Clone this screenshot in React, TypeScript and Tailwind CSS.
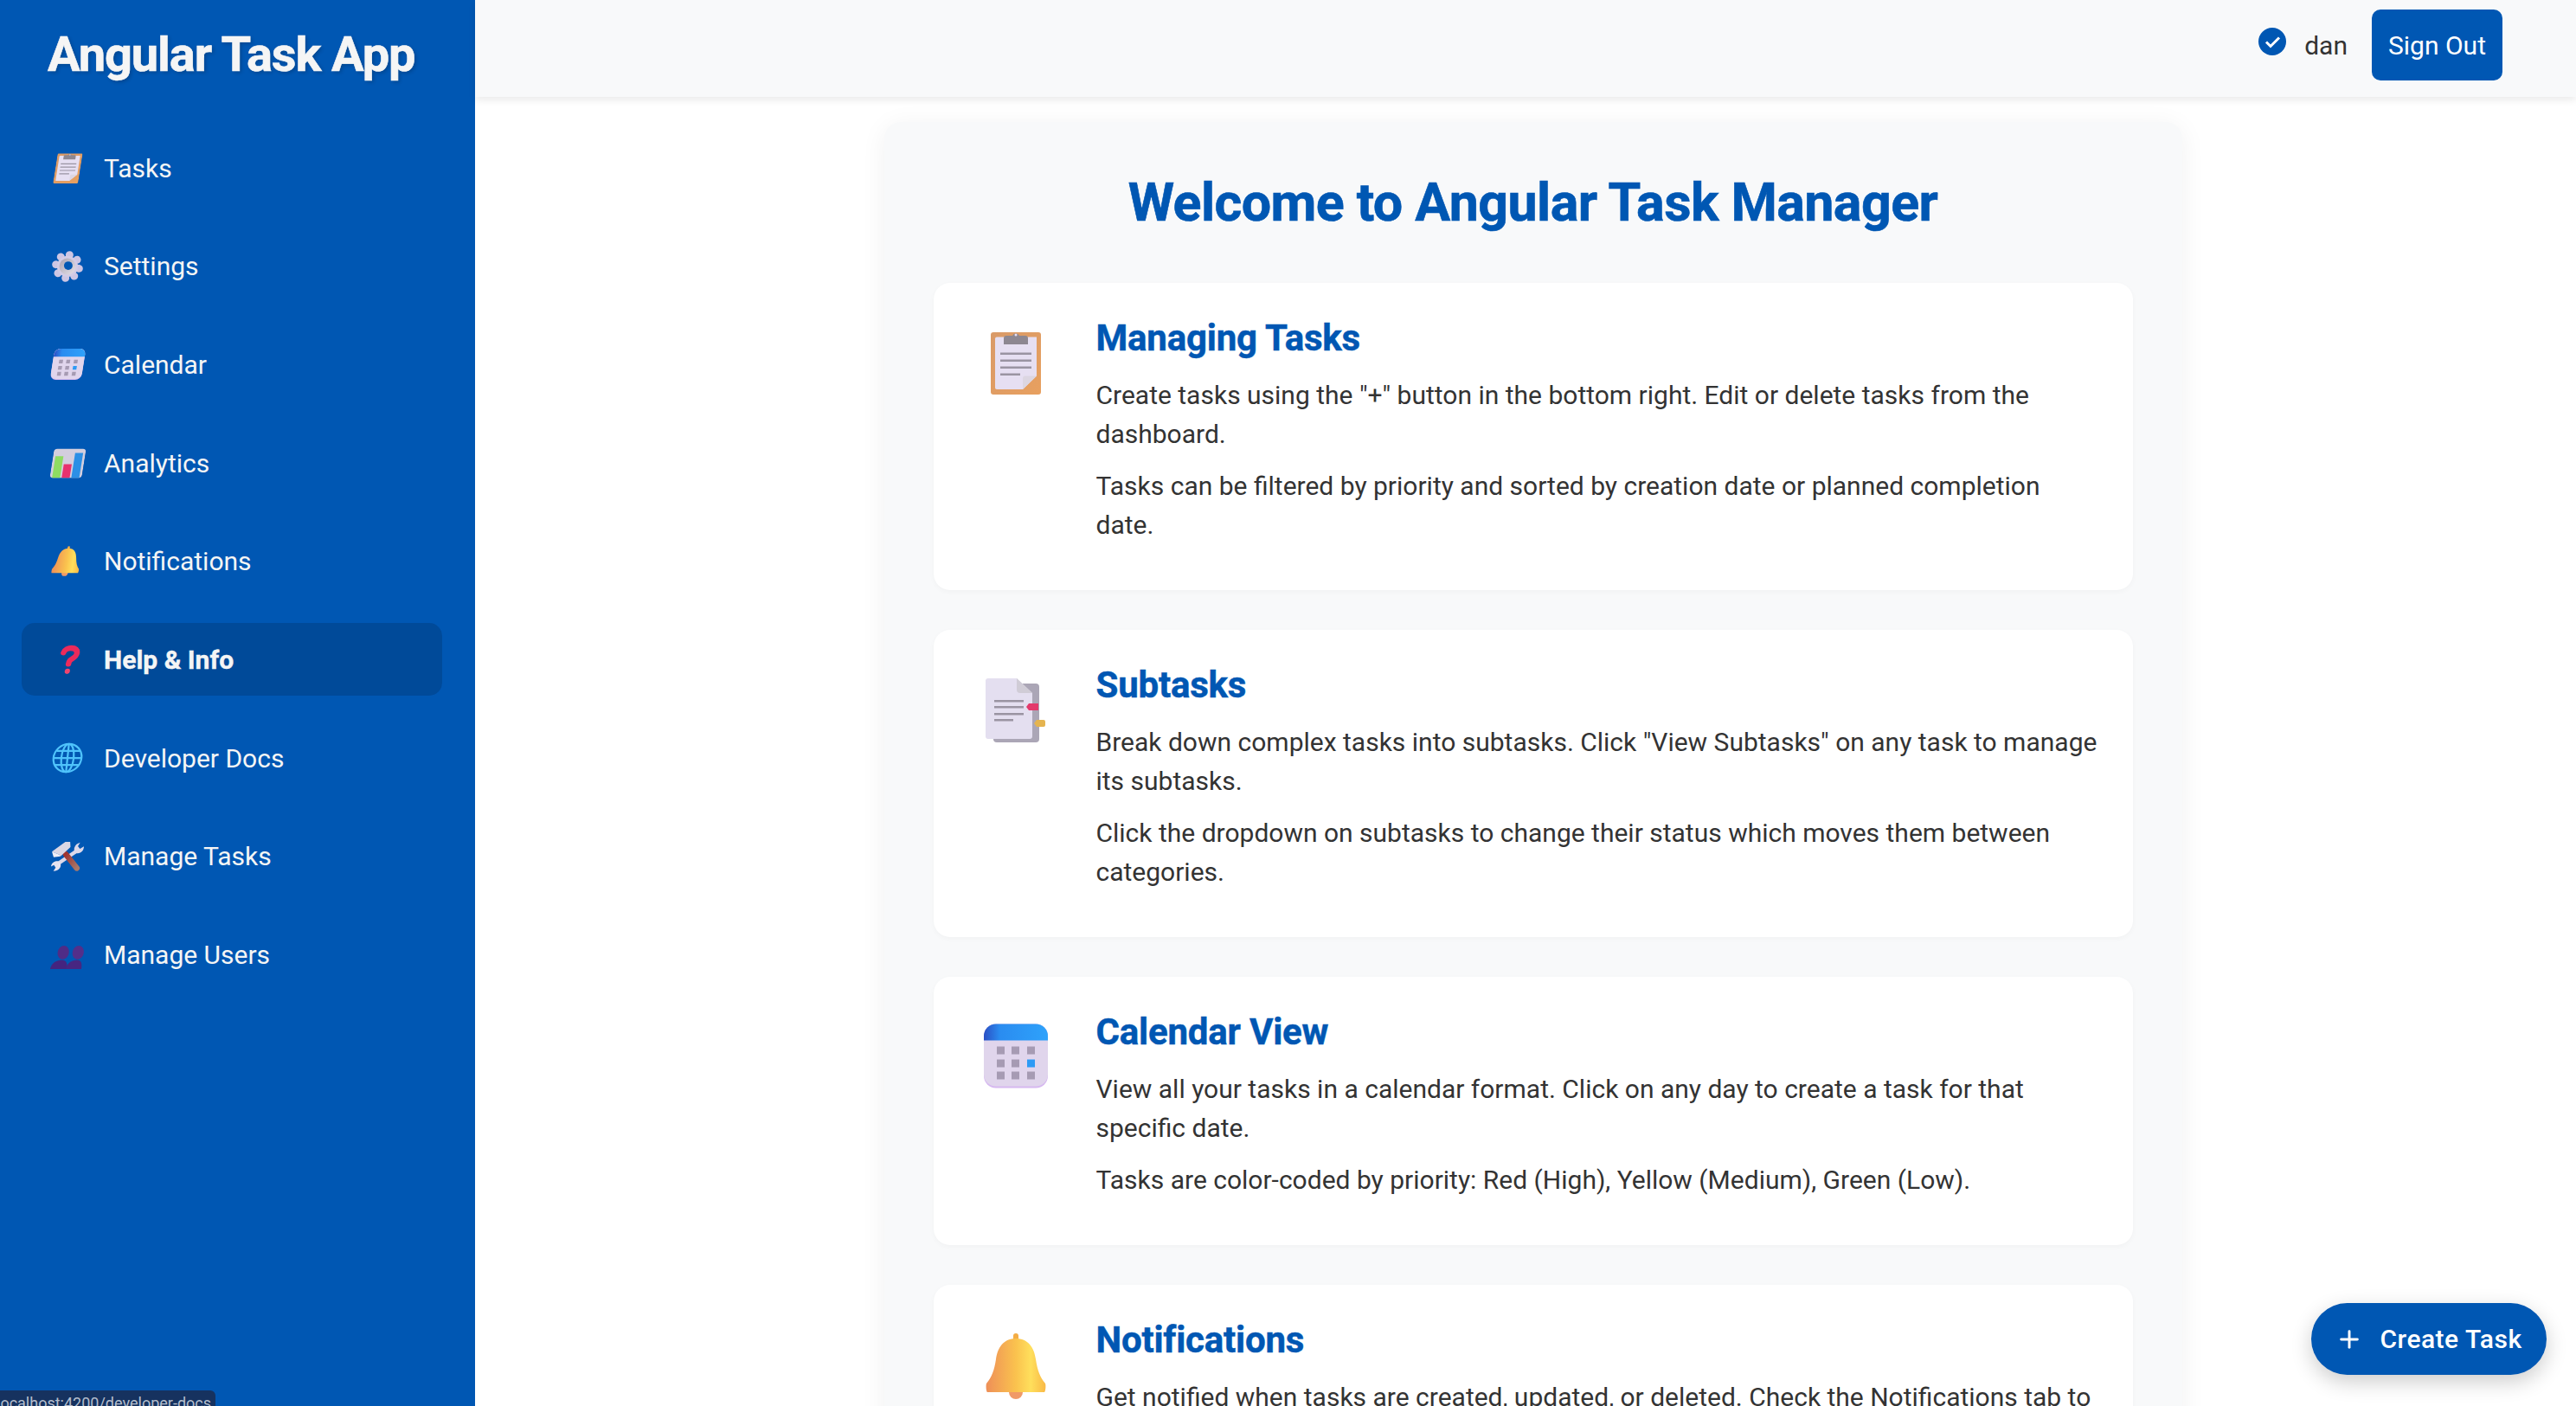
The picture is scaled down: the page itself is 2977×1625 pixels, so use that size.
import React from "react";
import { Plus } from "lucide-react";

type IconProps = { className?: string };

function ClipboardIcon({ className }: IconProps) {
  return (
    <svg viewBox="0 0 58 75" className={className} preserveAspectRatio="none">
      <defs>
        <linearGradient id="clipBoard" x1="0" y1="0" x2="1" y2="1">
          <stop offset="0" stopColor="#d99a68" />
          <stop offset="1" stopColor="#e8a05f" />
        </linearGradient>
      </defs>
      <rect x="0" y="3" width="58" height="72" rx="3" fill="url(#clipBoard)" />
      <path d="M7 8.500h46v45L37 69H7a2 2 0 0 1-2-2V10.500a2 2 0 0 1 2-2z" fill="#e6dff2" />
      <path d="M53 53.500H40a3 3 0 0 0-3 3V69z" fill="#dcd6e2" />
      <path d="M18 7h7a4.500 4.500 0 0 1 8 0h7a3 3 0 0 1 3 3v7H15v-7a3 3 0 0 1 3-3z" fill="#8d8791" />
      <circle cx="29" cy="6" r="1.500" fill="#e6dff2" />
      <rect x="11" y="26.500" width="36" height="2.500" fill="#9a94a2" />
      <rect x="11" y="34.500" width="36" height="2.500" fill="#9a94a2" />
      <rect x="11" y="42.500" width="36" height="2.500" fill="#9a94a2" />
      <rect x="11" y="50.500" width="23" height="2.500" fill="#9a94a2" />
    </svg>
  );
}

function PageIcon({ className }: IconProps) {
  return (
    <svg viewBox="0 0 70 76" className={className}>
      <rect x="9" y="6" width="53" height="68" rx="4" fill="#aba6b6" />
      <path d="M3 0h33l18 17v50a3 3 0 0 1-3 3H3a3 3 0 0 1-3-3V3a3 3 0 0 1 3-3z" fill="#e4dff0" />
      <path d="M36 0l18 17H40a4 4 0 0 1-4-4z" fill="#d0ccd6" />
      <rect x="10" y="25" width="34" height="2.500" fill="#9a94a2" />
      <rect x="10" y="32" width="34" height="2.500" fill="#9a94a2" />
      <rect x="10" y="40" width="34" height="2.500" fill="#9a94a2" />
      <rect x="10" y="47" width="22" height="2.500" fill="#9a94a2" />
      <path d="M50 29h11v8H50l-3-4z" fill="#e33a6c" />
      <path d="M59 48h8a2 2 0 0 1 2 2v4a2 2 0 0 1-2 2h-8l-3-4z" fill="#e5b44f" />
    </svg>
  );
}

function CalendarIcon({ className }: IconProps) {
  const cells = [
    [15, 26], [32, 26], [50, 26],
    [15, 41], [32, 41], [50, 41],
    [15, 55], [32, 55], [50, 55],
  ];
  return (
    <svg viewBox="0 0 74 74" className={className}>
      <defs>
        <linearGradient id="calTop" x1="0" y1="0" x2="1" y2="0">
          <stop offset="0" stopColor="#2b4fc4" />
          <stop offset="0.25" stopColor="#2a8cf0" />
          <stop offset="1" stopColor="#2ea2fb" />
        </linearGradient>
      </defs>
      <rect x="0" y="0" width="74" height="74" rx="14" fill="#d6b8f0" />
      <rect x="0" y="0" width="74" height="72" rx="14" fill="#e0d5ec" />
      <path d="M14 0h46a14 14 0 0 1 14 14v5H0v-5A14 14 0 0 1 14 0z" fill="url(#calTop)" />
      {cells.map(([x, y], i) => (
        <rect key={i} x={x} y={y} width="9" height="9" fill={i === 5 ? "#2e9bf5" : "#a69bb3"} />
      ))}
    </svg>
  );
}

function BellIcon({ className }: IconProps) {
  return (
    <svg viewBox="0 0 70 76" className={className}>
      <defs>
        <linearGradient id="bellBody" x1="0" y1="0" x2="1" y2="0">
          <stop offset="0" stopColor="#ee8f58" />
          <stop offset="0.5" stopColor="#fac24e" />
          <stop offset="0.75" stopColor="#ffdf5c" />
          <stop offset="1" stopColor="#f9b946" />
        </linearGradient>
      </defs>
      <circle cx="35" cy="68" r="8" fill="#f09a68" />
      <rect x="32" y="0" width="6" height="10" rx="3" fill="#f4ad45" />
      <path d="M35 6c-14 0-21 10-23 24-2 13-5 21-11 28-1 3 0 10 1 10h66c1 0 2-7 1-10-6-7-9-15-11-28C56 16 49 6 35 6z" fill="url(#bellBody)" />
    </svg>
  );
}

function GearIcon({ className }: IconProps) {
  const teeth = [10, 55, 100, 145, 190, 235, 280, 325];
  return (
    <svg viewBox="0 0 40 40" className={className}>
      <defs>
        <linearGradient id="gearRing" x1="0" y1="0" x2="1" y2="1">
          <stop offset="0" stopColor="#a8a2b0" />
          <stop offset="1" stopColor="#e6e2ea" />
        </linearGradient>
      </defs>
      {teeth.map((a) => (
        <circle key={a} cx="20" cy="5" r="5" fill="#cdc6e4" transform={`rotate(${a} 20 20)`} />
      ))}
      <circle cx="20" cy="20" r="13.500" fill="#d3cce6" />
      <circle cx="20" cy="20" r="10.500" fill="url(#gearRing)" />
      <circle cx="21" cy="19" r="5.500" fill="#0057b3" />
    </svg>
  );
}

function ChartIcon({ className }: IconProps) {
  return (
    <svg viewBox="0 0 40 36" className={className}>
      <rect x="0" y="0" width="40" height="36" rx="4" fill="#d3cede" />
      <rect x="3" y="9" width="10" height="27" fill="#8edc62" />
      <rect x="15" y="19" width="10" height="17" fill="#e8316e" />
      <rect x="27" y="5" width="10" height="31" fill="#2b8fe6" />
    </svg>
  );
}

function QuestionIcon({ className }: IconProps) {
  return (
    <svg viewBox="0 0 30 40" className={className}>
      <path
        d="M6 11c1-4 5-6 9-6 6 0 9 3 9 7 0 4-3 6-6 8-2 1-3 3-3 6"
        fill="none"
        stroke="#ec2a5b"
        strokeWidth="7.500"
        strokeLinecap="round"
      />
      <circle cx="15" cy="36" r="3.500" fill="#f0456e" />
    </svg>
  );
}

function GlobeIcon({ className }: IconProps) {
  return (
    <svg viewBox="0 0 40 40" className={className} fill="none" stroke="#4fc3fb" strokeWidth="2.500">
      <circle cx="20" cy="20" r="18" />
      <ellipse cx="20" cy="20" rx="8" ry="18" />
      <path d="M20 2v36M2 20h36M5 11h30M5 29h30" />
    </svg>
  );
}

function ToolsIcon({ className }: IconProps) {
  return (
    <svg viewBox="0 0 115 103" className={className}>
      <defs>
        <linearGradient id="toolHandle" x1="0" y1="0" x2="1" y2="1">
          <stop offset="0" stopColor="#a0342f" />
          <stop offset="1" stopColor="#a8786a" />
        </linearGradient>
      </defs>
      <path d="M25 76 92 30" stroke="#dcd8ea" strokeWidth="13" />
      <path d="M115 16c0 14-10 26-25 24-8-2-11-12-8-20 3-10 10-15 20-18l-8 13 7 9z" fill="#dcd8ea" />
      <path d="M0 86c2-12 12-20 25-18 9 3 11 13 7 21-5 9-14 13-24 13l8-12-6-9z" fill="#e6e2f0" />
      <path d="M52 44 90 92" stroke="url(#toolHandle)" strokeWidth="20" strokeLinecap="round" />
      <path d="M3 34 50 0h17l1 18-35 33-4-6z" fill="#dbd7e4" />
      <path d="M3 34l26 11 4 6-24 3z" fill="#f0eef6" />
    </svg>
  );
}

function UsersIcon({ className }: IconProps) {
  return (
    <svg viewBox="0 0 113 82" className={className}>
      <ellipse cx="40" cy="24" rx="20" ry="24" fill="#4f2c86" />
      <path d="M0 82C2 60 20 50 38 50c14 0 22 12 20 32z" fill="#44247f" />
      <ellipse cx="92" cy="24" rx="20" ry="24" fill="#532f8a" />
      <path d="M55 82c2-22 18-32 36-32 14 0 20 12 18 32z" fill="#472681" />
    </svg>
  );
}

const navItems = [
  { label: "Tasks", icon: ClipboardIcon, size: "w-[29px] h-[36px] skew-x-[-9deg]" },
  { label: "Settings", icon: GearIcon, size: "w-[36px] h-[36px]" },
  { label: "Calendar", icon: CalendarIcon, size: "w-[37px] h-[36px] skew-x-[-9deg]" },
  { label: "Analytics", icon: ChartIcon, size: "w-[37px] h-[35px] skew-x-[-9deg]" },
  { label: "Notifications", icon: BellIcon, size: "w-[32px] h-[35px] skew-x-[-9deg] -ml-[2px]" },
  { label: "Help & Info", icon: QuestionIcon, size: "w-[26px] h-[36px] skew-x-[-9deg] ml-[4px]", active: true },
  { label: "Developer Docs", icon: GlobeIcon, size: "w-[36px] h-[36px] skew-x-[-6deg]" },
  { label: "Manage Tasks", icon: ToolsIcon, size: "w-[38px] h-[34px]" },
  { label: "Manage Users", icon: UsersIcon, size: "w-[38px] h-[27px] mt-[6px] skew-x-[-6deg]" },
];

const sections = [
  {
    title: "Managing Tasks",
    icon: ClipboardIcon,
    size: "w-[58px] h-[75px]",
    paragraphs: [
      'Create tasks using the "+" button in the bottom right. Edit or delete tasks from the dashboard.',
      "Tasks can be filtered by priority and sorted by creation date or planned completion date.",
    ],
  },
  {
    title: "Subtasks",
    icon: PageIcon,
    size: "w-[70px] h-[76px] mt-[2px]",
    paragraphs: [
      'Break down complex tasks into subtasks. Click "View Subtasks" on any task to manage its subtasks.',
      "Click the dropdown on subtasks to change their status which moves them between categories.",
    ],
  },
  {
    title: "Calendar View",
    icon: CalendarIcon,
    size: "w-[74px] h-[75px]",
    paragraphs: [
      "View all your tasks in a calendar format. Click on any day to create a task for that specific date.",
      "Tasks are color-coded by priority: Red (High), Yellow (Medium), Green (Low).",
    ],
  },
  {
    title: "Notifications",
    icon: BellIcon,
    size: "w-[70px] h-[76px] mt-[2px]",
    paragraphs: [
      "Get notified when tasks are created, updated, or deleted. Check the Notifications tab to view your recent activity.",
    ],
  },
];

function Sidebar() {
  return (
    <aside className="w-[549px] shrink-0 bg-[#0057b3] text-[#f5f5f5] h-full relative">
      <h1 className="pl-[55px] pt-[28px] text-[56px] leading-[70px] font-bold tracking-[-1.1px] [-webkit-text-stroke:0.6px] [text-shadow:2px_2px_4px_rgba(0,0,0,0.2)]">
        Angular Task App
      </h1>
      <nav className="mt-[54px] flex flex-col gap-[29.7px] pl-[25px] pr-[38px]">
        {navItems.map((item) => (
          <a
            key={item.label}
            className={
              "h-[84px] flex items-center rounded-[15px] text-[30px] " +
              (item.active ? "bg-[#004a99] font-bold [-webkit-text-stroke:0.4px]" : "")
            }
          >
            <span className="w-[80px] pl-[26px] flex justify-center shrink-0">
              <item.icon className={item.size} />
            </span>
            <span className="ml-[15px]">{item.label}</span>
          </a>
        ))}
      </nav>
      <div className="absolute left-0 bottom-0 w-[249px] h-[18px] overflow-hidden bg-[#16325f] rounded-tr-[6px] text-[#b4bdcc] text-[18px] leading-[30px] whitespace-nowrap">
        <span className="-ml-[4px] block">localhost:4200/developer-docs</span>
      </div>
    </aside>
  );
}

function Header() {
  return (
    <header className="h-[112px] shrink-0 bg-[#f8f9fa] shadow-[0_4px_8px_rgba(0,0,0,0.08)] flex justify-end pt-[11px] pr-[85px] relative z-10">
      <div className="flex items-center h-[82px]">
        <svg viewBox="0 0 32 32" className="w-[32px] h-[32px] -mt-[8px]">
          <circle cx="16" cy="16" r="16" fill="#0057b3" />
          <path d="M9 16.500l5 5 10-10" fill="none" stroke="#fff" strokeWidth="3" />
        </svg>
        <span className="ml-[21px] text-[30px] text-[#333333]">dan</span>
        <button className="ml-[28px] h-[82px] w-[151px] rounded-[10px] bg-[#0057b3] text-white text-[30px]">
          Sign Out
        </button>
      </div>
    </header>
  );
}

function SectionCard({ section }: { section: (typeof sections)[number] }) {
  return (
    <div className="bg-white rounded-[19px] shadow-[0_2px_6px_rgba(0,0,0,0.03)] pl-[38px] pr-[40px] pt-[40px] pb-[53px] flex">
      <div className="w-[114px] shrink-0 flex justify-center items-start pt-[14px]">
        <section.icon className={section.size} />
      </div>
      <div className="ml-[36px] flex-1">
        <h3 className="text-[42px] leading-[48px] font-bold tracking-[-0.2px] [-webkit-text-stroke:0.5px] text-[#0057b3]">{section.title}</h3>
        {section.paragraphs.map((p) => (
          <p key={p} className="mt-[15px] first-of-type:mt-[19px] text-[30px] leading-[45px] text-[#333333]">
            {p}
          </p>
        ))}
      </div>
    </div>
  );
}

export default function App() {
  return (
    <div className="w-[2977px] h-[1625px] flex overflow-hidden bg-white font-['Roboto',sans-serif]">
      <Sidebar />
      <div className="flex-1 flex flex-col min-w-0 relative">
        <Header />
        <main className="flex-1 overflow-hidden pt-[29px] pl-[17px]">
          <div className="w-[1500px] mx-auto bg-[#f8f9fa] rounded-[19px] shadow-[0_4px_30px_rgba(0,0,0,0.06)] px-[57px] pt-[57px]">
            <h2 className="text-center text-[61px] leading-[72px] font-bold tracking-[-0.6px] [-webkit-text-stroke:0.6px] text-[#0057b3]">
              Welcome to Angular Task Manager
            </h2>
            <div className="mt-[57px] flex flex-col gap-[46px]">
              {sections.map((s) => (
                <SectionCard key={s.title} section={s} />
              ))}
            </div>
          </div>
        </main>
        <button className="absolute right-[34px] bottom-[36px] w-[272px] h-[83px] rounded-full bg-[#0057b3] text-white text-[30px] font-medium tracking-[0.5px] flex items-center justify-center gap-[19px] shadow-[0_8px_24px_rgba(0,0,0,0.2)]">
          <Plus className="w-[32px] h-[32px]" strokeWidth={2.2} />
          Create Task
        </button>
      </div>
    </div>
  );
}
